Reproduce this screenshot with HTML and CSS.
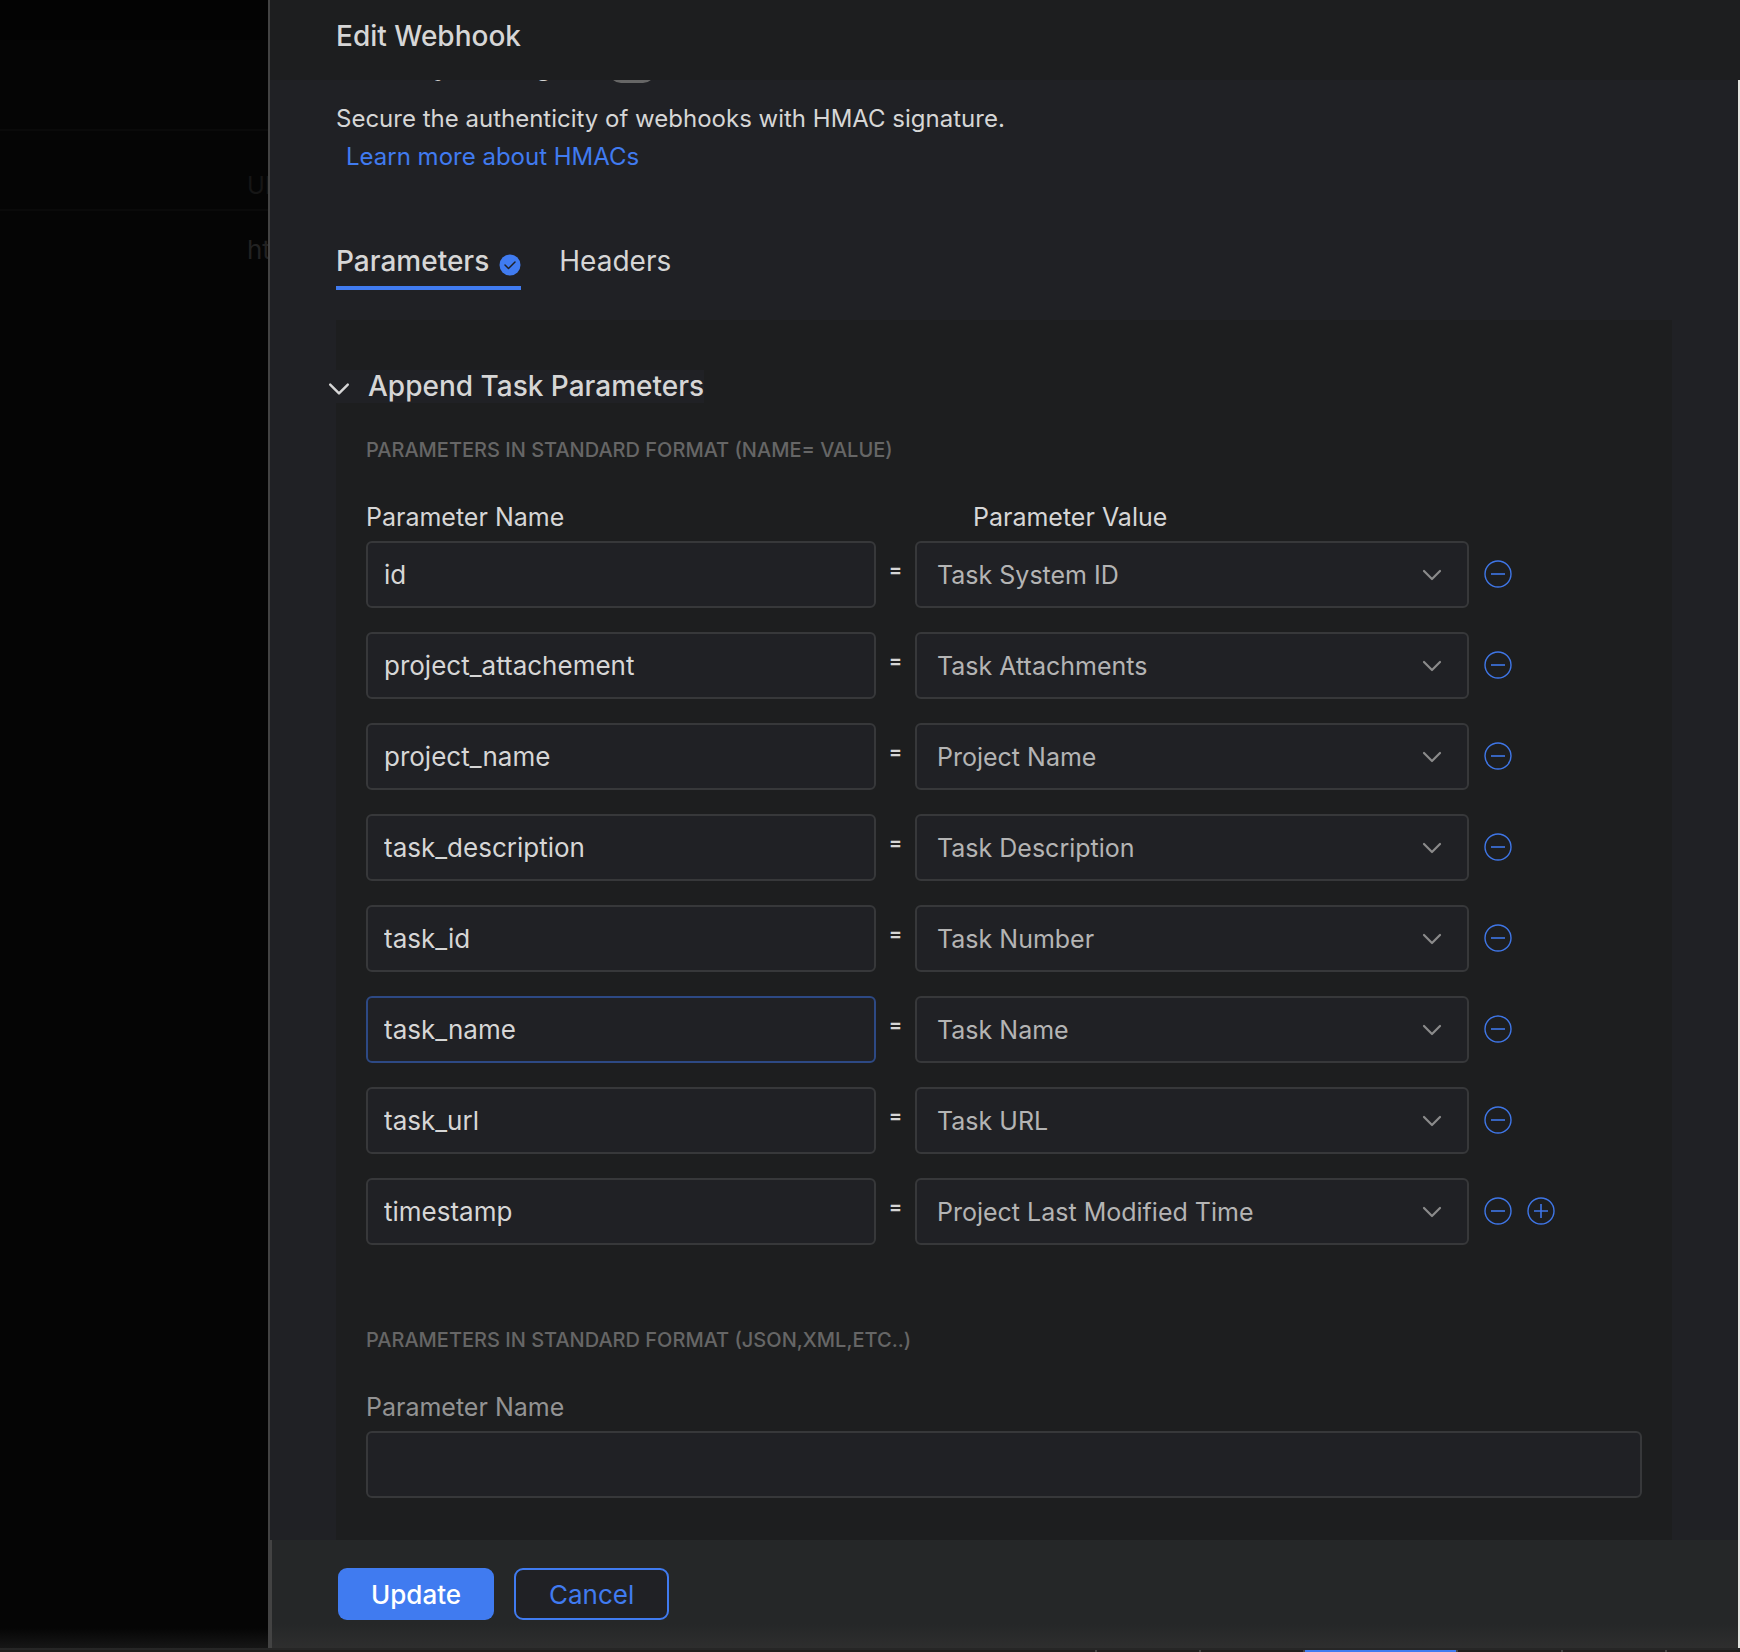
FILE: index.html
```html
<!DOCTYPE html>
<html lang="en">
<head>
    <meta charset="UTF-8">
    <meta name="viewport" content="width=device-width, initial-scale=1.0">
    <title>Edit Webhook</title>
    <link rel="stylesheet" href="styles.css">
</head>
<body>
    <!-- Shared icons -->
    <svg class="icon-defs" aria-hidden="true">
        <symbol id="icon-chevron" viewBox="0 0 20 12">
            <path d="M2 2 L10 10 L18 2" fill="none" stroke="currentColor" stroke-width="2.2" stroke-linecap="round" stroke-linejoin="round"/>
        </symbol>
        <symbol id="icon-minus" viewBox="0 0 28 28">
            <circle cx="14" cy="14" r="13" fill="none" stroke="currentColor" stroke-width="1.4"/>
            <path d="M7 14 H21" stroke="currentColor" stroke-width="1.6"/>
        </symbol>
        <symbol id="icon-plus" viewBox="0 0 28 28">
            <circle cx="14" cy="14" r="13" fill="none" stroke="currentColor" stroke-width="1.4"/>
            <path d="M7 14 H21 M14 7 V21" stroke="currentColor" stroke-width="1.6"/>
        </symbol>
    </svg>

    <div class="layout">
        <div class="backdrop">
            <div class="backdrop-top"></div>
            <div class="backdrop-toolbar"></div>
            <div class="backdrop-head">URL</div>
            <div class="backdrop-row">https</div>
        </div>

        <div class="drawer">
            <div class="drawer-header">
                <h1>Edit Webhook</h1>
            </div>

            <div class="drawer-body">
                <div class="security-row">
                    <label for="security">Security Setting</label>
                    <input type="checkbox" class="switch" id="security">
                </div>
                <div class="security-info">
                    <p>Secure the authenticity of webhooks with HMAC signature.</p>
                    <a href="#">Learn more about HMACs</a>
                </div>

                <div class="tabs">
                    <button type="button" class="tab active">
                        Parameters
                        <svg class="tab-check" viewBox="0 0 22 22" aria-hidden="true">
                            <circle cx="11" cy="11" r="10.5" fill="#407bf0"/>
                            <path d="M6 11 L9.5 14.5 L16 8" fill="none" stroke="#202125" stroke-width="1.5" stroke-linecap="round" stroke-linejoin="round"/>
                        </svg>
                    </button>
                    <button type="button" class="tab">Headers</button>
                </div>

                <div class="panel">
                    <h2 class="panel-title">
                        <svg aria-hidden="true"><use href="#icon-chevron"/></svg>
                        Append Task Parameters
                    </h2>

                    <h3 class="section-title">PARAMETERS IN STANDARD FORMAT (NAME= VALUE)</h3>
                    <div class="param-grid param-labels">
                        <span id="label-name">Parameter Name</span>
                        <span id="label-value" class="value-label">Parameter Value</span>
                    </div>

                    <div class="param-list">
                        <div class="param-grid">
                            <input type="text" class="field" value="id" aria-labelledby="label-name">
                            <span class="equals">=</span>
                            <div class="select-box">
                                <select class="field" aria-labelledby="label-value"><option>Task System ID</option></select>
                                <svg aria-hidden="true"><use href="#icon-chevron"/></svg>
                            </div>
                            <div class="row-actions">
                                <button type="button" aria-label="Remove"><svg><use href="#icon-minus"/></svg></button>
                            </div>
                        </div>
                        <div class="param-grid">
                            <input type="text" class="field" value="project_attachement" aria-labelledby="label-name">
                            <span class="equals">=</span>
                            <div class="select-box">
                                <select class="field" aria-labelledby="label-value"><option>Task Attachments</option></select>
                                <svg aria-hidden="true"><use href="#icon-chevron"/></svg>
                            </div>
                            <div class="row-actions">
                                <button type="button" aria-label="Remove"><svg><use href="#icon-minus"/></svg></button>
                            </div>
                        </div>
                        <div class="param-grid">
                            <input type="text" class="field" value="project_name" aria-labelledby="label-name">
                            <span class="equals">=</span>
                            <div class="select-box">
                                <select class="field" aria-labelledby="label-value"><option>Project Name</option></select>
                                <svg aria-hidden="true"><use href="#icon-chevron"/></svg>
                            </div>
                            <div class="row-actions">
                                <button type="button" aria-label="Remove"><svg><use href="#icon-minus"/></svg></button>
                            </div>
                        </div>
                        <div class="param-grid">
                            <input type="text" class="field" value="task_description" aria-labelledby="label-name">
                            <span class="equals">=</span>
                            <div class="select-box">
                                <select class="field" aria-labelledby="label-value"><option>Task Description</option></select>
                                <svg aria-hidden="true"><use href="#icon-chevron"/></svg>
                            </div>
                            <div class="row-actions">
                                <button type="button" aria-label="Remove"><svg><use href="#icon-minus"/></svg></button>
                            </div>
                        </div>
                        <div class="param-grid">
                            <input type="text" class="field" value="task_id" aria-labelledby="label-name">
                            <span class="equals">=</span>
                            <div class="select-box">
                                <select class="field" aria-labelledby="label-value"><option>Task Number</option></select>
                                <svg aria-hidden="true"><use href="#icon-chevron"/></svg>
                            </div>
                            <div class="row-actions">
                                <button type="button" aria-label="Remove"><svg><use href="#icon-minus"/></svg></button>
                            </div>
                        </div>
                        <div class="param-grid">
                            <input type="text" class="field current" value="task_name" aria-labelledby="label-name">
                            <span class="equals">=</span>
                            <div class="select-box">
                                <select class="field" aria-labelledby="label-value"><option>Task Name</option></select>
                                <svg aria-hidden="true"><use href="#icon-chevron"/></svg>
                            </div>
                            <div class="row-actions">
                                <button type="button" aria-label="Remove"><svg><use href="#icon-minus"/></svg></button>
                            </div>
                        </div>
                        <div class="param-grid">
                            <input type="text" class="field" value="task_url" aria-labelledby="label-name">
                            <span class="equals">=</span>
                            <div class="select-box">
                                <select class="field" aria-labelledby="label-value"><option>Task URL</option></select>
                                <svg aria-hidden="true"><use href="#icon-chevron"/></svg>
                            </div>
                            <div class="row-actions">
                                <button type="button" aria-label="Remove"><svg><use href="#icon-minus"/></svg></button>
                            </div>
                        </div>
                        <div class="param-grid">
                            <input type="text" class="field" value="timestamp" aria-labelledby="label-name">
                            <span class="equals">=</span>
                            <div class="select-box">
                                <select class="field" aria-labelledby="label-value"><option>Project Last Modified Time</option></select>
                                <svg aria-hidden="true"><use href="#icon-chevron"/></svg>
                            </div>
                            <div class="row-actions">
                                <button type="button" aria-label="Remove"><svg><use href="#icon-minus"/></svg></button>
                                <button type="button" aria-label="Add"><svg><use href="#icon-plus"/></svg></button>
                            </div>
                        </div>
                    </div>

                    <h3 class="section-title">PARAMETERS IN STANDARD FORMAT (JSON,XML,ETC..)</h3>
                    <label class="custom-label" for="custom-name">Parameter Name</label>
                    <input type="text" class="field" id="custom-name">
                </div>
            </div>

            <div class="drawer-footer">
                <button type="button" class="btn btn-primary">Update</button>
                <button type="button" class="btn btn-outline">Cancel</button>
            </div>
        </div>
    </div>

    <!-- Top edge of the chat bar -->
    <div class="bottom-bar">
        <span class="slot"></span>
        <span class="slot"></span>
        <span class="slot selected"></span>
        <span class="slot wide"></span>
        <span class="slot"></span>
        <span class="slot last"></span>
    </div>
</body>
</html>
```

FILE: styles.css
```css
* {
    box-sizing: border-box;
    margin: 0;
    padding: 0;
}

body {
    display: flex;
    flex-direction: column;
    height: 100vh;
    overflow: hidden;
    font-family: Inter, "Liberation Sans", sans-serif;
    font-size: 24px;
    background: #050505;
    color: #d6d6d6;
}

button,
input,
select {
    font: inherit;
    color: inherit;
}

button {
    border: none;
    background: none;
    cursor: pointer;
}

.icon-defs {
    display: none;
}

.layout {
    flex: 1;
    min-height: 0;
    display: grid;
    grid-template-columns: 268px 1fr;
}

/* Dimmed page behind the drawer */
.backdrop {
    overflow: hidden;
    background: linear-gradient(#050505 calc(100% - 20px), #161616);
}

.backdrop-top {
    height: 40px;
    background: #030303;
}

.backdrop-toolbar {
    height: 91px;
    border-bottom: 2px solid #0a0a0a;
}

.backdrop-head,
.backdrop-row {
    height: 80px;
    padding-left: 247px;
    line-height: 110px;
    border-bottom: 2px solid #0a0a0a;
    color: #161616;
}

.backdrop-row {
    line-height: 78px;
    border: none;
    font-size: 26px;
    color: #222;
}

/* Drawer */
.drawer {
    display: flex;
    flex-direction: column;
    min-width: 0;
    min-height: 0;
    background: #202125;
}

.drawer-header {
    height: 80px;
    padding: 18px 66px;
    border-left: 2px solid #434343;
    background: #1d1e1f;
}

.drawer-header h1 {
    font-size: 28px;
    font-weight: 500;
    line-height: 36px;
}

.drawer-body {
    flex: 1;
    min-height: 0;
    display: flex;
    flex-direction: column;
    overflow: hidden;
    padding: 0 66px;
    border-left: 2px solid #434343;
    border-right: 2px solid #e4e4e0;
}

/* Scrolled almost out of view under the header */
.security-row {
    display: flex;
    align-items: flex-end;
    gap: 56px;
    height: 36px;
    margin: -33px 0 17px;
    font-size: 28px;
    font-weight: 600;
    line-height: 36px;
}

.switch {
    appearance: none;
    width: 46px;
    height: 24px;
    border-radius: 12px;
    background: #666;
}

.security-info {
    line-height: 38px;
    margin-bottom: 68px;
}

.security-info a {
    margin-left: 10px;
    color: #407bf0;
    text-decoration: none;
}

.tabs {
    display: flex;
    gap: 38px;
    margin-bottom: 30px;
}

.tab {
    display: flex;
    align-items: center;
    gap: 10px;
    padding-bottom: 8px;
    border-bottom: 4px solid transparent;
    font-size: 28px;
    line-height: 34px;
}

.tab.active {
    font-weight: 500;
    border-color: #407bf0;
}

.tab-check {
    width: 22px;
    height: 22px;
    margin-top: 8px;
}

.panel {
    flex: 1;
    padding: 50px 30px;
    background: #1d1e1f;
}

.panel-title {
    display: flex;
    align-items: center;
    gap: 18px;
    width: fit-content;
    margin: 0 0 33px -38px;
    font-size: 28px;
    font-weight: 500;
    line-height: 33px;
    background: #202125;
}

.panel-title svg {
    width: 22px;
    height: 14px;
    margin-top: 4px;
}

.section-title {
    margin-bottom: 37px;
    font-size: 20px;
    font-weight: 500;
    line-height: 28px;
    color: #666;
}

.param-grid {
    display: grid;
    grid-template-columns: 510fr 39px 554fr 173px;
    align-items: center;
}

.param-labels,
.custom-label {
    margin-bottom: 7px;
    font-size: 25px;
    line-height: 33px;
}

.value-label {
    grid-column: 3;
    padding-left: 58px;
}

.param-list {
    display: flex;
    flex-direction: column;
    gap: 24px;
    margin-bottom: 81px;
}

.field {
    width: 100%;
    min-width: 0;
    height: 67px;
    padding: 0 16px;
    border: 2px solid #37383a;
    border-radius: 6px;
    outline: none;
    background: #202125;
    font-size: 26px;
}

.field.current {
    border-color: #2d4984;
}

.equals {
    padding-bottom: 10px;
    text-align: center;
    font-size: 20px;
    font-weight: 600;
}

.select-box {
    position: relative;
}

.select-box select {
    appearance: none;
    padding: 0 20px;
    font-size: 25px;
    color: #b4b4b4;
}

.select-box svg {
    position: absolute;
    top: 28px;
    right: 27px;
    width: 20px;
    height: 12px;
    color: #8b8b8b;
    pointer-events: none;
}

.row-actions {
    display: flex;
    gap: 15px;
    padding: 0 0 2px 15px;
    color: #3f76e6;
}

.row-actions svg {
    display: block;
    width: 28px;
    height: 28px;
}

.custom-label {
    display: block;
    color: #939393;
}

.drawer-footer {
    display: flex;
    gap: 20px;
    height: 108px;
    padding: 28px 66px;
    border-left: 4px solid #434343;
    border-right: 2px solid #e4e4e0;
    background: linear-gradient(#252728 calc(100% - 24px), #2e2e2e);
}

.btn {
    height: 52px;
    padding: 0 33px;
    border-radius: 9px;
    font-size: 26px;
}

.btn-primary {
    background: #407bf0;
    color: #fff;
    font-weight: 500;
}

.btn-outline {
    border: 2px solid #407bf0;
    background: #202125;
    color: #407bf0;
}

.bottom-bar {
    display: flex;
    justify-content: flex-end;
    height: 4px;
    padding-top: 2px;
    background: linear-gradient(#262626 2px, #201c1d 2px);
}

.slot {
    width: 104px;
    border-left: 2px solid #444;
}

.slot.selected {
    width: 153px;
    background: #407bf0;
}

.slot.wide {
    width: 105px;
}

.slot.last {
    width: 75px;
}
```
